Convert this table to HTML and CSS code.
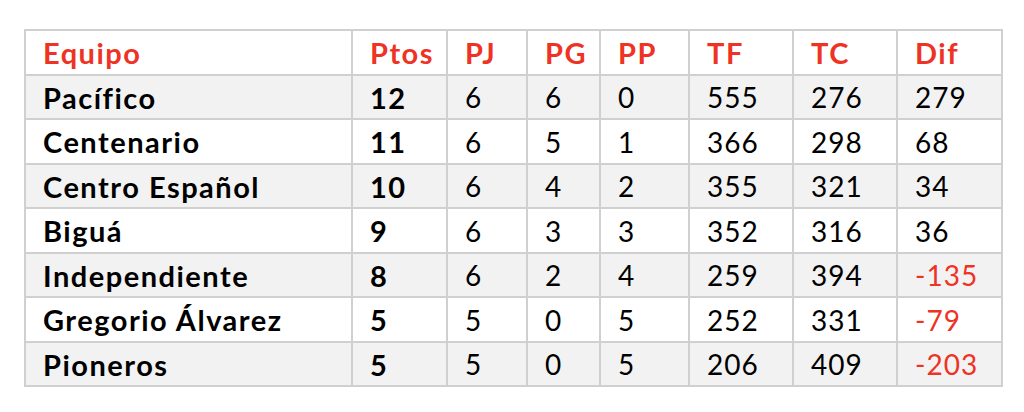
FILE: index.html
```html
<!DOCTYPE html>
<html lang="es">
<head>
<meta charset="utf-8">
<link rel="stylesheet" href="styles.css">
</head>
<body>
<table class="standings">
  <colgroup>
    <col class="c-team"><col class="c-pts"><col class="c-pj"><col class="c-pg"><col class="c-pp"><col class="c-tf"><col class="c-tc"><col class="c-dif">
  </colgroup>
  <thead>
    <tr><th>Equipo</th><th>Ptos</th><th>PJ</th><th>PG</th><th>PP</th><th>TF</th><th>TC</th><th>Dif</th></tr>
  </thead>
  <tbody>
    <tr class="alt"><td class="team">Pacífico</td><td class="pts">12</td><td>6</td><td>6</td><td>0</td><td>555</td><td>276</td><td>279</td></tr>
    <tr><td class="team">Centenario</td><td class="pts">11</td><td>6</td><td>5</td><td>1</td><td>366</td><td>298</td><td>68</td></tr>
    <tr class="alt"><td class="team">Centro Español</td><td class="pts">10</td><td>6</td><td>4</td><td>2</td><td>355</td><td>321</td><td>34</td></tr>
    <tr><td class="team">Biguá</td><td class="pts">9</td><td>6</td><td>3</td><td>3</td><td>352</td><td>316</td><td>36</td></tr>
    <tr class="alt"><td class="team">Independiente</td><td class="pts">8</td><td>6</td><td>2</td><td>4</td><td>259</td><td>394</td><td class="neg">-135</td></tr>
    <tr><td class="team">Gregorio Álvarez</td><td class="pts">5</td><td>5</td><td>0</td><td>5</td><td>252</td><td>331</td><td class="neg">-79</td></tr>
    <tr class="alt"><td class="team">Pioneros</td><td class="pts">5</td><td>5</td><td>0</td><td>5</td><td>206</td><td>409</td><td class="neg">-203</td></tr>
  </tbody>
</table>
</body>
</html>
```
FILE: styles.css
```css
html, body {
  margin: 0;
  padding: 0;
  background: #ffffff;
}
body {
  padding: 29px 0 0 24px;
  font-family: Lato, "Open Sans", sans-serif;
  color: #000000;
}
.standings {
  border-collapse: collapse;
  table-layout: fixed;
  width: 977px;
  font-size: 28px;
}
.c-team { width: 327px; }
.c-pts { width: 95px; }
.c-pj { width: 80px; }
.c-pg { width: 73px; }
.c-pp { width: 89px; }
.c-tf { width: 104px; }
.c-tc { width: 104px; }
.c-dif { width: 105px; }
.standings th,
.standings td {
  border: 2px solid #d0d0d0;
  padding: 1px 0 0 17px;
  height: 41.5px;
  text-align: left;
  vertical-align: middle;
  line-height: 1;
  white-space: nowrap;
  letter-spacing: 1px;
}
.standings th {
  color: #ee3325;
  font-weight: 700;
  font-size: 29px;
  letter-spacing: 1.5px;
}
.standings td {
  font-weight: 400;
}
.standings td.team,
.standings td.pts {
  font-weight: 700;
  font-size: 29px;
  letter-spacing: 1.5px;
}
.standings tr.alt td {
  background: #f2f2f2;
}
.standings td.neg {
  color: #ee3325;
}
```
